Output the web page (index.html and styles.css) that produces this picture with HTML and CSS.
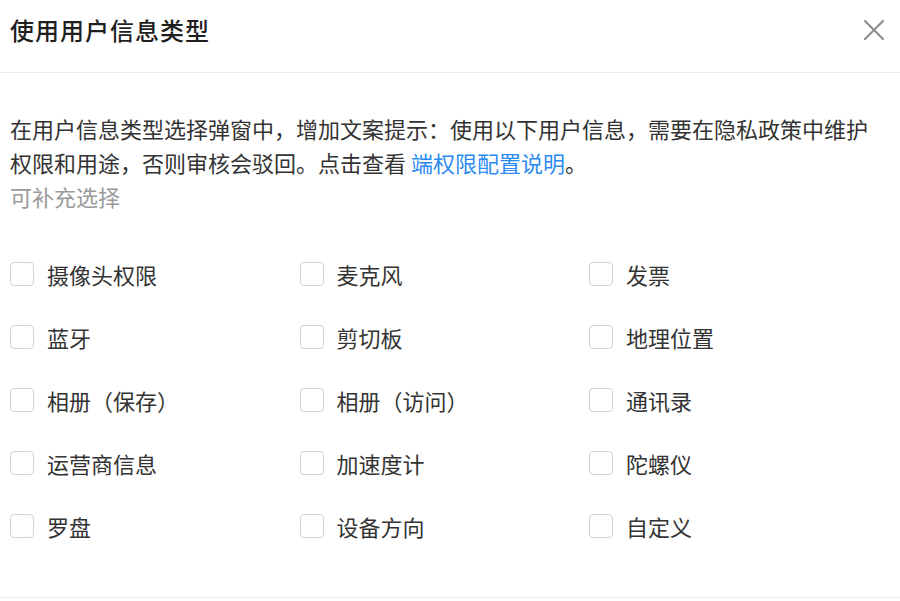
FILE: index.html
```html
<!DOCTYPE html>
<html lang="zh-CN">
<head>
<meta charset="utf-8">
<link rel="stylesheet" href="styles.css">
</head>
<body>
<div class="modal">
  <div class="modal-header">
    <div class="modal-title">使用用户信息类型</div>
    <button class="modal-close" aria-label="关闭">
      <svg width="20" height="20" viewBox="0 0 20 20"><path d="M1 1 L19 19 M19 1 L1 19" stroke="#8a8a8a" stroke-width="2" fill="none" stroke-linecap="round"/></svg>
    </button>
  </div>
  <div class="modal-body">
    <p class="desc">在用户信息类型选择弹窗中，增加文案提示：使用以下用户信息，需要在隐私政策中维护权限和用途，否则审核会驳回。点击查看 <a class="link" href="#">端权限配置说明</a>。</p>
    <p class="hint">可补充选择</p>
    <div class="options">
      <label class="option"><span class="box"></span><span class="label">摄像头权限</span></label>
      <label class="option"><span class="box"></span><span class="label">麦克风</span></label>
      <label class="option"><span class="box"></span><span class="label">发票</span></label>
      <label class="option"><span class="box"></span><span class="label">蓝牙</span></label>
      <label class="option"><span class="box"></span><span class="label">剪切板</span></label>
      <label class="option"><span class="box"></span><span class="label">地理位置</span></label>
      <label class="option"><span class="box"></span><span class="label">相册（保存）</span></label>
      <label class="option"><span class="box"></span><span class="label">相册（访问）</span></label>
      <label class="option"><span class="box"></span><span class="label">通讯录</span></label>
      <label class="option"><span class="box"></span><span class="label">运营商信息</span></label>
      <label class="option"><span class="box"></span><span class="label">加速度计</span></label>
      <label class="option"><span class="box"></span><span class="label">陀螺仪</span></label>
      <label class="option"><span class="box"></span><span class="label">罗盘</span></label>
      <label class="option"><span class="box"></span><span class="label">设备方向</span></label>
      <label class="option"><span class="box"></span><span class="label">自定义</span></label>
    </div>
  </div>
</div>
</body>
</html>
```

FILE: styles.css
```css
html, body {
  margin: 0;
  padding: 0;
  background: #fff;
}
body {
  font-family: "Noto Sans CJK SC", "Noto Sans", sans-serif;
  color: #333;
}
.modal {
  width: 900px;
  height: 601px;
  box-sizing: border-box;
  display: flex;
  flex-direction: column;
}
.modal-header {
  height: 72px;
  border-bottom: 1px solid #ebebeb;
  display: flex;
  align-items: center;
  justify-content: space-between;
  padding: 0 16px 0 10px;
  box-sizing: content-box;
}
.modal-title {
  font-size: 24px;
  letter-spacing: 1px;
  font-weight: 500;
  color: #1f1f1f;
  line-height: 32px;
  margin-top: -13px;
}
.modal-close {
  border: 0;
  background: none;
  padding: 0;
  width: 20px;
  height: 20px;
  margin-top: -12px;
  cursor: pointer;
  display: flex;
}
.modal-body {
  flex: 1;
  border-bottom: 1px solid #ebebeb;
  padding: 38px 22px 0 10px;
  margin-bottom: 3px;
}
.desc {
  margin: 0;
  font-size: 22px;
  line-height: 34px;
  color: #333;
}
.link {
  color: #2b8bf2;
  text-decoration: none;
}
.hint {
  margin: 0;
  font-size: 22px;
  line-height: 34px;
  color: #9a9a9a;
}
.options {
  margin-top: 49px;
  display: grid;
  grid-template-columns: 289.5px 289.5px 1fr;
  row-gap: 39px;
}
.option {
  display: flex;
  align-items: center;
  gap: 13px;
  height: 24px;
  cursor: pointer;
}
.box {
  width: 22px;
  height: 22px;
  border: 1px solid #d3d3d3;
  border-radius: 4px;
  background: #fff;
  flex: none;
}
.label {
  font-size: 22px;
  line-height: 24px;
  color: #333;
}
```
